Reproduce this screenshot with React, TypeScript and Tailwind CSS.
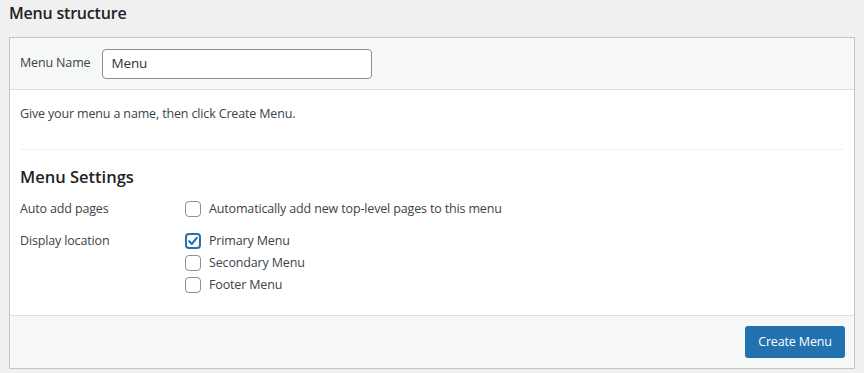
import React from "react";

const font = { fontFamily: '"Open Sans", "Noto Sans", sans-serif' };

function Box({ checked }: { checked?: boolean }) {
  return (
    <span
      className={`flex h-4 w-4 shrink-0 items-center justify-center rounded-[4px] bg-white ${
        checked ? "border-2 border-[#2271b1]" : "border border-[#8c8f94]"
      }`}
    >
      {checked && (
        <svg width="12" height="12" viewBox="0 0 12 12">
          <path d="M2.2 6.2 L4.9 8.9 L9.8 2.8" fill="none" stroke="#2271b1" strokeWidth="2.1" strokeLinecap="round" strokeLinejoin="round" />
        </svg>
      )}
    </span>
  );
}

function Check({ label, checked }: { label: string; checked?: boolean }) {
  return (
    <div className="flex h-[22px] items-center gap-2">
      <Box checked={checked} />
      <span className="text-[12.5px] tracking-[-0.15px] text-[#3c434a]">{label}</span>
    </div>
  );
}

export default function App() {
  return (
    <div className="h-[373px] w-[864px] bg-[#f0f0f1] px-[9px]" style={font}>
      <h2 className="flex h-[37px] items-start pt-[1px] text-[16px] font-semibold leading-[24px] tracking-[-0.2px] text-[#1d2327]">
        Menu structure
      </h2>
      <div className="border border-[#c3c4c7] bg-white">
        <div className="flex h-[52px] items-center gap-[12px] border-b border-[#dcdcde] bg-[#f6f7f7] px-[10px]">
          <span className="text-[12.5px] tracking-[-0.15px] text-[#3c434a]">Menu Name</span>
          <div className="flex h-[30px] w-[270px] items-center rounded-[4px] border border-[#8c8f94] bg-white px-[8px] text-[13.5px] tracking-[-0.15px] text-[#2c3338]">
            Menu
          </div>
        </div>
        <div className="h-[225px] px-[10px]">
          <p className="flex h-[48px] items-center pt-[1px] text-[12.5px] tracking-[-0.15px] text-[#3c434a]">
            Give your menu a name, then click Create Menu.
          </p>
          <div className="mt-[11px] border-t border-[#f0f0f1]" />
          <h3 className="mt-[15px] flex h-[24px] items-center text-[16.5px] font-semibold text-[#1d2327]">
            Menu Settings
          </h3>
          <div className="mt-[9px] flex">
            <div className="flex h-[22px] w-[165px] items-center text-[12.5px] tracking-[-0.15px] text-[#3c434a]">Auto add pages</div>
            <Check label="Automatically add new top-level pages to this menu" />
          </div>
          <div className="mt-[10px] flex">
            <div className="flex h-[22px] w-[165px] items-center text-[12.5px] tracking-[-0.15px] text-[#3c434a]">Display location</div>
            <div className="flex flex-col">
              <Check label="Primary Menu" checked />
              <Check label="Secondary Menu" />
              <Check label="Footer Menu" />
            </div>
          </div>
        </div>
        <div className="flex h-[53px] justify-end border-t border-[#dcdcde] bg-[#f6f7f7] pr-[9px] pt-[10px]">
          <button className="h-[32px] w-[100px] rounded-[3px] bg-[#2271b1] text-[12.5px] tracking-[-0.15px] text-white">
            Create Menu
          </button>
        </div>
      </div>
    </div>
  );
}
